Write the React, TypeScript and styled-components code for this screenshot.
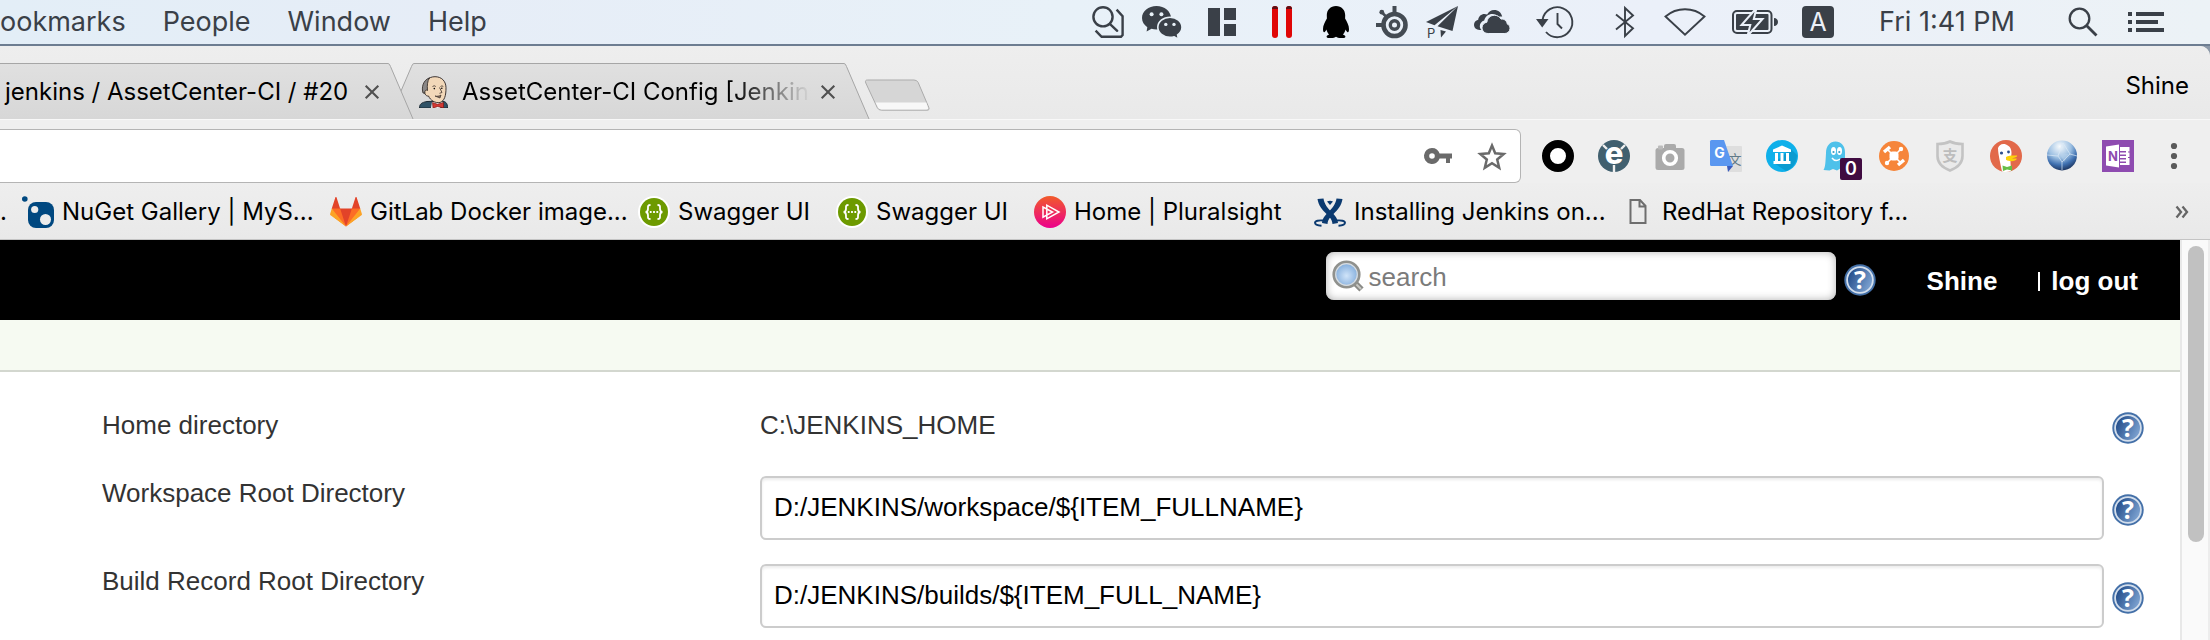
import React from 'react';
import styled, { createGlobalStyle } from 'styled-components';

const UI_FONT = 'Inter, Roboto, sans-serif';
const PAGE_FONT = '"Liberation Sans", Arial, Helvetica, sans-serif';
const INK = '#3a4048';

const GlobalStyle = createGlobalStyle`
  *, *::before, *::after { box-sizing: border-box; }
  body { margin: 0; background: #8d99a8; overflow: hidden; }
  button, input { font: inherit; color: inherit; margin: 0; padding: 0; border: 0; background: none; outline: none; }
  button { cursor: pointer; }
  a { color: inherit; text-decoration: none; }
  svg { display: block; flex: none; overflow: visible; }
`;

const Screen = styled.div`
  display: flex;
  flex-direction: column;
  min-height: 100vh;
  font-family: ${UI_FONT};
`;

/* ---------- system menu bar ---------- */

const MenuBar = styled.header`
  display: flex;
  align-items: center;
  justify-content: space-between;
  height: 46px;
  padding-right: 26px;
  color: ${INK};
  background: linear-gradient(90deg, #e3eef7, #e6edf7 20%, #e8f1f8 48%, #ebf0f9 75%, #ecf2f6);
  border-bottom: 2px solid #6d7d91;
  font-size: 27px;
  line-height: 32px;
  white-space: nowrap;
`;

const Menus = styled.nav`
  display: flex;
  gap: 37px;
`;

const MenuTitle = styled.button`
  height: 44px;
`;

const StatusArea = styled.div`
  display: flex;
  align-items: center;
`;

const StatusItem = styled.button<{ $width: number }>`
  display: flex;
  align-items: center;
  justify-content: center;
  width: ${(p) => p.$width}px;
  height: 44px;
`;

/* ---------- browser ---------- */

const Browser = styled.div`
  display: flex;
  flex: 1;
  flex-direction: column;
  border-top-right-radius: 10px;
  background: #ececec;
  overflow: hidden;
`;

const TabStrip = styled.div`
  display: flex;
  align-items: flex-end;
  height: 73px;
  background: linear-gradient(#eeeeee, #e9e9e9);
  font-size: 24px;
  line-height: 30px;
  color: #000;
`;

const Tab = styled.div<{ $width: number; $front?: boolean }>`
  position: relative;
  z-index: ${(p) => (p.$front ? 1 : 0)};
  display: flex;
  flex: none;
  width: ${(p) => p.$width}px;
  height: 56px;
  & + & { margin-left: -26px; }
`;

const TabBody = styled.div<{ $lead: number }>`
  display: flex;
  flex: 1;
  align-items: center;
  min-width: 0;
  padding: 0 8px 0 ${(p) => p.$lead}px;
  border-top: 1px solid #a6a6a6;
  background: linear-gradient(#e0e0e0, #d7d7d7);
`;

const TabTitle = styled.button<{ $fade?: boolean }>`
  display: flex;
  flex: 1;
  align-items: center;
  gap: 13px;
  min-width: 0;
  white-space: nowrap;
  mask-image: ${(p) => (p.$fade ? 'linear-gradient(90deg, #000 80%, transparent)' : 'none')};
`;

const CloseTab = styled.button`
  display: flex;
  justify-content: center;
  width: 16px;
  margin-left: 9px;
`;

const NewTab = styled.button`
  flex: none;
  margin: 0 0 8px -6px;
`;

const Account = styled.button`
  align-self: center;
  margin: 6px 21px 0 auto;
  line-height: 30px;
  height: 30px;
`;

const Toolbar = styled.div`
  display: flex;
  align-items: center;
  gap: 21px;
  padding: 9px 20px 0 0;
  border-top: 1px solid #f8f8f8;
  background: #efefef;
`;

const Omnibox = styled.div`
  display: flex;
  flex: 1;
  align-items: center;
  gap: 25px;
  height: 54px;
  padding-right: 13px;
  background: #fff;
  border: 1px solid #b4b4b4;
  border-left: 0;
  border-radius: 0 6px 6px 0;
`;

const Address = styled.input`
  flex: 1;
  min-width: 0;
  height: 50px;
  font-size: 24px;
`;

const Extensions = styled.div`
  display: flex;
  gap: 24px;
`;

const ExtensionButton = styled.button`
  position: relative;
  width: 32px;
  height: 32px;
`;

const Badge = styled.span`
  position: absolute;
  top: 18px;
  left: 18px;
  width: 22px;
  height: 22px;
  border-radius: 2px;
  background: #400b41;
  color: #fff;
  font-size: 18px;
  font-weight: 600;
  line-height: 22px;
  text-align: center;
`;

const BookmarksBar = styled.nav`
  display: flex;
  align-items: center;
  height: 57px;
  padding: 2px 21px 0 0;
  background: linear-gradient(#eeeeee, #e9e9e9);
  border-bottom: 1px solid #c4c4c4;
  font-size: 24px;
  line-height: 30px;
  color: #000;
  white-space: nowrap;
`;

const CutBookmark = styled.a`
  width: 22px;
`;

const Bookmark = styled.a<{ $width: number }>`
  display: flex;
  flex: none;
  align-items: center;
  gap: 8px;
  width: ${(p) => p.$width}px;
`;

const MoreBookmarks = styled.button`
  display: flex;
  margin-left: auto;
`;

/* ---------- web page ---------- */

const Viewport = styled.div`
  display: flex;
  flex: 1;
  background: #fff;
`;

const Page = styled.main`
  flex: 1;
  min-width: 0;
  font-family: ${PAGE_FONT};
  font-size: 26px;
  line-height: 30px;
  color: #333;
`;

const PageHeader = styled.div`
  display: flex;
  align-items: center;
  justify-content: flex-end;
  height: 80px;
  padding-right: 42px;
  background: #000;
  color: #fff;
  font-weight: bold;
`;

const SearchBox = styled.label`
  display: flex;
  align-items: center;
  gap: 5px;
  width: 510px;
  height: 48px;
  margin-bottom: 8px;
  padding: 0 6px;
  border-radius: 8px;
  background: #fff;
  box-shadow: inset 0 0 8px #b0b0b0;
  font-weight: normal;
`;

const SearchInput = styled.input`
  flex: 1;
  min-width: 0;
  height: 34px;
  padding-top: 2px;
  color: #000;
  &::placeholder { color: #7b7b7b; opacity: 1; }
`;

const HelpLink = styled.a`
  flex: none;
  width: 32px;
  height: 32px;
`;

const SearchHelp = styled(HelpLink)`
  margin: 0 51px 0 8px;
`;

const LogOut = styled.span`
  display: flex;
  align-items: center;
  gap: 11px;
  margin-left: 41px;
  &::before {
    content: '';
    width: 2px;
    height: 19px;
    background: #fff;
  }
`;

const HeaderText = styled.div`
  display: flex;
  padding-top: 2px;
`;

const Breadcrumbs = styled.div`
  height: 52px;
  background: #f6faf2;
  border-bottom: 2px solid #d3d7cf;
`;

const Form = styled.form`
  padding: 36px 36px 0 102px;
`;

const Row = styled.div<{ $height: number; $lead: number }>`
  display: grid;
  grid-template-columns: 658px 1fr 32px;
  align-items: start;
  height: ${(p) => p.$height}px;
  & > ${HelpLink} { margin-top: ${(p) => p.$lead}px; }
`;

const FieldLabel = styled.label`
  padding-top: 2px;
`;

const FieldValue = styled.output`
  padding-top: 2px;
`;

const TextField = styled.input`
  height: 64px;
  margin-right: 8px;
  padding: 0 12px 2px;
  border: 2px solid #ccc;
  border-radius: 6px;
  box-shadow: inset 0 2px 3px rgba(0, 0, 0, 0.08);
  background: #fff;
  color: #000;
`;

const ScrollTrack = styled.div`
  width: 30px;
  padding: 6px 4px 0 6px;
  background: #fafafa;
  border-left: 2px solid #e8e8e8;
  border-right: 2px solid #ededed;
`;

const ScrollThumb = styled.div`
  width: 16px;
  height: 296px;
  border-radius: 8px;
  background: #c1c1c1;
`;

/* ---------- drawings ---------- */

const FindNoteIcon = () => (
  <svg width="32" height="32" viewBox="0 0 32 32" fill="none" stroke={INK} strokeWidth="2.4">
    <circle cx="11" cy="10.8" r="9.6" />
    <path d="M17.8 17.8l7.4 7" strokeLinecap="round" />
    <path d="M24.6 3.6l6 6.6V29l-1.6 1.8H9.6L3.6 24.6" />
  </svg>
);

const WeChatIcon = () => (
  <svg width="40" height="34" viewBox="0 0 40 34">
    <path fill={INK} d="M14.5 1C6.5 1 0 6.3 0 13c0 3.8 2.1 7 5.3 9.2L4.6 26.5l4.9-2.7c1.6.4 3.2.7 5 .7C22.5 24.5 29 19.5 29 13S22.5 1 14.5 1z" />
    <circle cx="9.6" cy="9.3" r="2" fill="#e8f1f8" />
    <circle cx="19.4" cy="9.3" r="2" fill="#e8f1f8" />
    <path fill={INK} stroke="#e8f1f8" strokeWidth="1.6" d="M28 12.2c-6.8 0-12.2 4.5-12.2 10.1S21.2 32.4 28 32.4c1.5 0 2.9-.2 4.2-.6l4.2 2.3-.8-4.2c2.6-1.8 4.4-4.5 4.4-7.6 0-5.6-5.3-10.1-12-10.1z" />
    <circle cx="23.8" cy="19.4" r="1.7" fill="#e8f1f8" />
    <circle cx="32" cy="19.4" r="1.7" fill="#e8f1f8" />
  </svg>
);

const PanesIcon = () => (
  <svg width="28" height="28" viewBox="0 0 28 28" fill={INK}>
    <path d="M0 0h12v28H0zM16 0h12v12H16zM16 16h12v12H16z" />
  </svg>
);

const ParallelsIcon = () => (
  <svg width="20" height="32" viewBox="0 0 20 32">
    <rect x="0" y="0" width="6" height="32" rx="3" fill="#e00606" />
    <rect x="14" y="0" width="6" height="32" rx="3" fill="#e00606" />
    <path d="M0 3a3 3 0 0 1 6 0zM14 3a3 3 0 0 1 6 0z" fill="#5b1015" />
  </svg>
);

const PenguinIcon = () => (
  <svg width="26" height="32" viewBox="0 0 26 32">
    <path d="M13 0C7.5 0 3.8 4 3.8 9.3c0 1.2.1 2.2.1 3.2C2 15.8 0 19.5 0 23c0 2.3.6 3.4 1.2 3.2.7-.2 1.6-1.4 2.3-2.7.4 1.9 1.3 3.6 2.6 5-1.600.5-2.5 1.3-2.5 2.2 0 1.3 2 1.3 4.6 1.3 2 0 3.8-.4 4.8-1.2 1 .8 2.8 1.2 4.8 1.2 2.6 0 4.6 0 4.600-1.3 0-.9-.9-1.7-2.5-2.2 1.3-1.4 2.2-3.1 2.6-5 .7 1.3 1.6 2.5 2.3 2.7.6.2 1.2-.9 1.2-3.2 0-3.500-2-7.200-3.900-10.500 0-1 .1-2 .1-3.200C22.200 4 18.500 0 13 0z" />
  </svg>
);

const GearNodeIcon = () => (
  <svg width="32" height="32" viewBox="0 0 32 32" fill="none" stroke="#444b53">
    <circle cx="18.5" cy="19" r="11" strokeWidth="4.6" />
    <circle cx="18.5" cy="19" r="4.2" strokeWidth="3.4" />
    <path d="M18.500 8V0M8 19H0" strokeWidth="4" />
    <path d="M10.500 11L5.500 6" strokeWidth="2.5" />
    <circle cx="5.8" cy="6.2" r="2.4" fill="#444b53" stroke="none" />
  </svg>
);

const PlaneIcon = () => (
  <svg width="32" height="34" viewBox="0 0 32 34" fill={INK}>
    <path d="M32 1L0 17l8.500 3.200zM32 1L11.500 21.300 26.500 26z" />
    <path d="M14.500 25l5.500 1.500-5 6z" />
    <text x="1" y="33" fontSize="13" fontFamily="Inter, sans-serif">P</text>
  </svg>
);

const CloudsIcon = () => (
  <svg width="36" height="24" viewBox="0 0 36 24" fill={INK}>
    <path d="M7.500 20H5.600C2.300 20 0 17.700 0 14.800c0-2.600 1.700-4.600 4.200-5.100C4.500 6.200 7.300 3.900 10.400 3.900c1 0 1.800.2 2.700.6C14.500 1.800 17 0 20.200 0c4 0 7.200 2.700 8 6.700-1.200-.2-2.300-.1-3.400.2C23 4.900 20.800 4 18.500 4c-4.100 0-7.500 2.700-8.300 6.600-2.700.8-4.400 3-4.400 5.700 0 1.400.6 2.700 1.700 3.700z" />
    <path d="M14.200 23.500C10.700 23.500 8 21 8 17.800c0-2.900 2.100-5.200 4.900-5.600.4-4 3.600-6.900 7.500-6.900 2.900 0 5.300 1.500 6.600 3.800 3.100-.5 6 1.800 6.300 5 1.700.6 2.700 2.200 2.700 4.200 0 2.900-2.200 5.200-5.100 5.200z" stroke="#e9f0f9" strokeWidth="1" />
  </svg>
);

const TimeMachineIcon = () => (
  <svg width="38" height="34" viewBox="0 0 38 34" fill="none" stroke={INK} strokeWidth="1.9">
    <path d="M6.500 15A15 15 0 1 1 10 27" />
    <path d="M0 14h12.500L6.200 22.500z" fill={INK} stroke="none" />
    <path d="M21.500 8v11l4.500 4.500" />
  </svg>
);

const BluetoothIcon = () => (
  <svg width="18" height="32" viewBox="0 0 18 32" fill="none" stroke={INK} strokeWidth="1.9">
    <path d="M0 8.500l17 13.700-8 7.800V2l8 7.500L0 23.500" />
  </svg>
);

const WifiIcon = () => (
  <svg width="42" height="28" viewBox="0 0 42 28" fill="none" stroke={INK} strokeWidth="1.9">
    <path d="M1.500 8.500Q10 1.300 21 1.300t19.500 7.200L21 26.600z" />
  </svg>
);

const BatteryIcon = () => (
  <svg width="46" height="28" viewBox="0 0 46 28">
    <rect x="1" y="3" width="38.5" height="22" rx="4" fill="none" stroke={INK} strokeWidth="2" />
    <rect x="4" y="6" width="32.5" height="16" rx="1" fill={INK} />
    <path d="M42 10c2.500 0 4 1.700 4 4s-1.500 4-4 4z" fill={INK} />
    <path d="M24.500 0L9.500 17h8.800L15.500 28l15-17h-8.700z" fill={INK} stroke="#ebf0f9" strokeWidth="2" />
  </svg>
);

const InputSourceIcon = () => (
  <svg width="32" height="32" viewBox="0 0 32 32">
    <rect width="32" height="32" rx="4" fill={INK} />
    <text x="16" y="25" fontSize="25" textAnchor="middle" fill="#ecf0f8" fontFamily="Inter, sans-serif">A</text>
  </svg>
);

const SpotlightIcon = () => (
  <svg width="30" height="30" viewBox="0 0 30 30" fill="none" stroke={INK} strokeWidth="2.3">
    <circle cx="11.5" cy="11.5" r="9.8" />
    <path d="M18.500 18.500l10 10" strokeWidth="2.8" />
  </svg>
);

const ListIcon = () => (
  <svg width="36" height="20" viewBox="0 0 36 20" fill={INK}>
    <path d="M0 0h4v4H0zM8 0h28v4H8zM0 8h4v4H0zM8 8h22v4H8zM0 16h4v4H0zM8 16h28v4H8z" />
  </svg>
);

const JenkinsIcon = () => (
  <svg width="30" height="32" viewBox="0 0 30 32">
    <path d="M.5 32c0-4 2-5.500 7.500-6.500l14-.5c5 .5 6.500 2 6.500 7z" fill="#2f5266" stroke="#1c2a33" />
    <path d="M13 26l-1 6h9l3-6z" fill="#f4f4f4" />
    <path d="M5.500 12C5.500 5 9.500.7 16 .7S26.800 5 27 11.500c.1 8-1.500 13.500-6 15-5 .8-9.500-2-11.500-6.500C6.500 20.500 4.500 16.500 5.500 12z" fill="#f2d8b9" stroke="#2b2320" strokeWidth=".9" />
    <path d="M8.500 14.500c-1.500-1-3 0-2.600 2.800L4 17C2.500 12 3.500 4.500 10.500 1.800 8.500 5 8 9 8.500 14.500z" fill="#8a8786" stroke="#2b2320" strokeWidth=".8" />
    <path d="M13.500 10.500q1.800-1.500 3.300 0M21.500 10.500q1.500-1.300 2.800 0M20.500 11.500l2.500 5-2.500.8" fill="none" stroke="#3a2f2a" strokeWidth=".8" />
    <path d="M16 20c2 .5 4 .3 6-1l-1 3z" fill="#8a7466" stroke="#3a2f2a" strokeWidth=".7" />
    <circle cx="15.3" cy="12.6" r=".8" /><circle cx="22.8" cy="12.3" r=".8" />
    <path d="M13.500 26.500l5 1.800 6-1.800V32l-5.800-1.500L14 32z" fill="#d33833" stroke="#7c1511" strokeWidth=".7" />
  </svg>
);

const CloseIcon = () => (
  <svg width="14" height="14" viewBox="0 0 14 14" stroke="#505050" strokeWidth="2.1">
    <path d="M.7.7l12.600 12.600M13.300.7L.7 13.300" />
  </svg>
);

const TabEdge = ({ side }: { side: 'left' | 'right' }) => (
  <svg width="26" height="56" viewBox="0 0 26 56" aria-hidden="true">
    <defs>
      <linearGradient id={`edge-${side}`} x1="0" y1="0" x2="0" y2="1">
        <stop offset="0" stopColor="#e0e0e0" />
        <stop offset="1" stopColor="#d7d7d7" />
      </linearGradient>
    </defs>
    {side === 'right' ? (
      <>
        <path d="M0 0q1.500 0 2.500 3L25 56H0z" fill={`url(#edge-${side})`} />
        <path d="M0 .5q1.500 0 2.500 3L25 56" fill="none" stroke="#a6a6a6" />
      </>
    ) : (
      <>
        <path d="M26 0q-1.500 0-2.500 3L1 56h25z" fill={`url(#edge-${side})`} />
        <path d="M26 .5q-1.500 0-2.500 3L1 56" fill="none" stroke="#a6a6a6" />
      </>
    )}
  </svg>
);

const NewTabShape = () => (
  <svg width="66" height="32" viewBox="0 0 66 32">
    <path d="M3.500 1H50q3 0 4.200 2.500l10.500 24.700q1.300 3-1.700 3H17.500q-3 0-4.200-2.500L1.800 4Q.6 1 3.500 1z" fill="#d6d6d6" stroke="#ababab" />
    <path d="M11.500 23.500h50.800L64 28.500q.6 2-1.500 2H17.500q-2.500 0-3.500-2z" fill="#f8f8f8" />
  </svg>
);

const KeyIcon = () => (
  <svg width="28" height="16" viewBox="0 0 28 16" fill="#6a6a6a">
    <path fillRule="evenodd" d="M8 0a8 8 0 1 0 7.600 10.400H22V15h4v-4.600h2V5.600H15.600A8 8 0 0 0 8 0zm0 5.200a2.800 2.800 0 1 1 0 5.600 2.800 2.800 0 0 1 0-5.600z" />
  </svg>
);

const StarIcon = () => (
  <svg width="30" height="28" viewBox="0 0 30 28" fill="none" stroke="#6a6a6a" strokeWidth="2.5">
    <path d="M15 3.500l3.200 7.800 8.500.7-6.500 5.500 2 8.300-7.200-4.500-7.200 4.500 2-8.300L3.300 12l8.500-.7z" />
  </svg>
);

const RingIcon = () => (
  <svg width="32" height="32" viewBox="0 0 32 32">
    <circle cx="16" cy="16" r="12" fill="#fff" stroke="#000" strokeWidth="8" />
  </svg>
);

const BugIcon = () => (
  <svg width="32" height="32" viewBox="0 0 32 32">
    <circle cx="16" cy="16" r="16" fill="#41606f" />
    <path d="M5 5l4 4M27 5l-4 4M16 25v7" stroke="#f0f0f0" strokeWidth="2.4" />
    <text x="16" y="24" fontSize="31" fontWeight="800" textAnchor="middle" fill="#fff" fontFamily="Inter, sans-serif">e</text>
  </svg>
);

const CameraIcon = () => (
  <svg width="32" height="32" viewBox="0 0 32 32">
    <rect x="1.5" y="8" width="29" height="22" rx="2.5" fill="#aaa" />
    <rect x="10" y="4" width="12" height="7" rx="2" fill="#aaa" />
    <rect x="4" y="5.5" width="5" height="4" rx="1" fill="#bbb" />
    <circle cx="16" cy="18" r="6.3" fill="#aaa" stroke="#fff" strokeWidth="3.6" />
  </svg>
);

const TranslateIcon = () => (
  <svg width="32" height="32" viewBox="0 0 32 32">
    <path d="M16 6h15q1 0 1 1v24q0 1-1 1H18z" fill="#dedede" />
    <text x="25" y="24" fontSize="13" textAnchor="middle" fill="#607988" fontFamily='"Noto Sans CJK SC", sans-serif'>文</text>
    <path d="M17 26h6l-5 6z" fill="#3a5bbd" />
    <path d="M1.500 0H14l9 26H1.500Q0 26 0 24.500v-23Q0 0 1.500 0z" fill="#5a97f0" />
    <text x="9.5" y="18" fontSize="14" fontWeight="700" textAnchor="middle" fill="#fff" fontFamily="Inter, sans-serif">G</text>
  </svg>
);

const TempleIcon = () => (
  <svg width="32" height="32" viewBox="0 0 32 32">
    <circle cx="16" cy="16" r="16" fill="#0fb0ea" />
    <path d="M25 9l6 6a16 16 0 0 1-11 16L8 23z" fill="#0a9bd0" />
    <path d="M16 5.500L25 9.500V12H7V9.500zM9 13h3v8H9zM14.500 13h3v8h-3zM20 13h3v8h-3zM7.500 21h17v3h-17z" fill="#fff" />
  </svg>
);

const GhostIcon = () => (
  <svg width="32" height="32" viewBox="0 0 32 32">
    <path d="M4 13C4 6 8 1.500 13.500 1.500S23 6 23 12v18l-4-2-4 2.500-4-1.500-3.500 1.500-6-.5c2-3 2-9 2.500-17z" fill="#4ec1ea" />
    <ellipse cx="11.500" cy="11" rx="2.500" ry="4" fill="#fff" />
    <ellipse cx="17.500" cy="11" rx="2.500" ry="4" fill="#fff" />
    <circle cx="11.500" cy="12" r="1.100" fill="#3a9cc4" /><circle cx="17.300" cy="12" r="1.100" fill="#3a9cc4" />
    <path d="M10 18q3.500 4.500 8 1" fill="none" stroke="#fff" strokeWidth="1.5" />
  </svg>
);

const DroneIcon = () => (
  <svg width="32" height="32" viewBox="0 0 32 32">
    <circle cx="16" cy="16" r="15" fill="#f6853a" />
    <path d="M9 9l14 14M23 9L9 23" stroke="#fff" strokeWidth="1.6" />
    <path d="M6 12l6-5M20 25l6-5" stroke="#fff" strokeWidth="3.4" />
    <circle cx="23" cy="9" r="2.2" fill="#fff" /><circle cx="9" cy="23" r="2.2" fill="#fff" />
    <rect x="11.5" y="11.5" width="9" height="9" rx="3" fill="#fff" />
  </svg>
);

const ShieldIcon = () => (
  <svg width="32" height="32" viewBox="0 0 32 32">
    <path d="M16 1.500c4 2 8 2.500 12.500 2.500v12c0 7-4.500 11.500-12.500 14.500C8 27.500 3.500 23 3.500 16V4C8 4 12 3.500 16 1.500z" fill="#eaeaea" stroke="#c3c3c3" strokeWidth="2.6" />
    <text x="16" y="21" fontSize="15" fontWeight="700" textAnchor="middle" fill="#bdbdbd" fontFamily='"Noto Sans CJK SC", sans-serif'>支</text>
  </svg>
);

const DuckIcon = () => (
  <svg width="32" height="32" viewBox="0 0 32 32">
    <circle cx="16" cy="16" r="16" fill="#e2694a" />
    <path d="M8 8c1-3 4-5 8-3.500C20 6 21.500 9 21.500 13c0 4-1.500 6-1 9l.5 9c-3 1.200-6 1.300-9 .5C10.500 24 8 14 8 8z" fill="#fff" />
    <circle cx="11.500" cy="13" r="1.600" fill="#2d4f8e" /><circle cx="18.500" cy="12" r="1.400" fill="#2d4f8e" />
    <path d="M16 17c3-2 8-1.500 11-1.500 1 1-2 2.200-5 2.800 2 .3 4 .2 5 .4-1 2.500-7 3.500-11 1z" fill="#fdd20a" />
    <path d="M12.500 25.500l4.500 1.500 5-1.500v5l-5-1-4 1.500z" fill="#67bd47" />
  </svg>
);

const GlobeIcon = () => (
  <svg width="32" height="32" viewBox="0 0 32 32">
    <defs>
      <radialGradient id="globe" cx=".42" cy=".2" r=".85">
        <stop offset="0" stopColor="#f6fafd" />
        <stop offset=".45" stopColor="#9dc0e2" />
        <stop offset=".72" stopColor="#3f70b0" />
        <stop offset="1" stopColor="#16294f" />
      </radialGradient>
    </defs>
    <circle cx="16" cy="15.5" r="15" fill="url(#globe)" />
    <path d="M1 15l11 1 4 6 8-8-7-11M12 16l5-13M24 14l7 2M16 22v8" stroke="#dceaf6" strokeOpacity=".7" fill="none" />
    <path d="M14 14l4 8 5-8z" fill="#b9d3ec" fillOpacity=".5" />
  </svg>
);

const OneNoteIcon = () => (
  <svg width="32" height="32" viewBox="0 0 32 32">
    <rect width="32" height="32" fill="#8e4bb0" />
    <path d="M4 6.500L17 4.500v23l-13-2z" fill="#fff" />
    <path d="M18 7h9.500v18H18v-2h6v-1.500h-6v-2h6V18h-6v-2h6v-1.500h-6v-2h6V11h-6z" fill="#fff" />
    <path d="M26 12h3M26 17.500h3" stroke="#8e4bb0" strokeWidth="1.2" />
    <text x="11" y="20.500" fontSize="13" fontWeight="700" textAnchor="middle" fill="#8e4bb0" fontFamily="Inter, sans-serif">N</text>
  </svg>
);

const DotsIcon = () => (
  <svg width="32" height="32" viewBox="0 0 32 32" fill="#5a5a5a">
    <circle cx="16" cy="6" r="3.1" /><circle cx="16" cy="16" r="3.1" /><circle cx="16" cy="26" r="3.1" />
  </svg>
);

const NuGetIcon = () => (
  <svg width="32" height="32" viewBox="0 0 32 32">
    <circle cx="2.8" cy="3" r="2.8" fill="#004880" />
    <rect x="6" y="6" width="26" height="26" rx="8" fill="#004880" />
    <circle cx="12.7" cy="13.5" r="3.6" fill="#ececec" />
    <circle cx="23.5" cy="23.5" r="5.5" fill="#ececec" />
  </svg>
);

const GitLabIcon = () => (
  <svg width="32" height="32" viewBox="0 0 36 36">
    <path fill="#e24329" d="M2 14l9.380 9v-9l-4-12.280c-.205-.632-1.176-.632-1.380 0z" />
    <path fill="#e24329" d="M34 14l-9.380 9v-9l4-12.280c.205-.632 1.176-.632 1.380 0z" />
    <path fill="#e24329" d="M18 34.380L3 14h30z" />
    <path fill="#fc6d26" d="M18 34.380L11.380 14H2l4 11z" />
    <path fill="#fc6d26" d="M18 34.380L24.620 14H34l-4 11z" />
    <path fill="#fca326" d="M2 14L.1 20.160c-.18.565 0 1.200.5 1.560l17.420 12.660z" />
    <path fill="#fca326" d="M34 14l1.900 6.160c.18.565 0 1.200-.5 1.560L18 34.380z" />
  </svg>
);

const SwaggerIcon = () => (
  <svg width="32" height="32" viewBox="0 0 32 32">
    <circle cx="16" cy="16" r="16" fill="#fff" />
    <circle cx="16" cy="16" r="14" fill="#6d9a00" />
    <path d="M12.500 9c-3 0-2.500 1.500-2.500 3.500S9.500 16 7.500 16c2 0 2.500 1.500 2.500 3.500s-.5 3.500 2.500 3.500M19.500 9c3 0 2.500 1.500 2.500 3.500s.5 3.500 2.500 3.500c-2 0-2.500 1.500-2.500 3.500s.5 3.500-2.500 3.500" fill="none" stroke="#fff" strokeWidth="1.8" />
    <path d="M11.800 16h1.800M15.100 16h1.800M18.400 16h1.800" stroke="#fff" strokeWidth="1.8" />
  </svg>
);

const PluralsightIcon = () => (
  <svg width="32" height="32" viewBox="0 0 32 32">
    <defs>
      <linearGradient id="ps" x1="0" y1="0" x2="0" y2="1">
        <stop offset="0" stopColor="#f15b2a" />
        <stop offset="1" stopColor="#ec008c" />
      </linearGradient>
    </defs>
    <circle cx="16" cy="16" r="16" fill="url(#ps)" />
    <path d="M12.800 9.200v13.600L25 16zM9 11v10.200L18.500 16z" fill="none" stroke="#fff" strokeWidth="1.5" />
  </svg>
);

const ConfluenceIcon = () => (
  <svg width="32" height="32" viewBox="0 0 32 32" fill="#0b3a70">
    <path d="M3.500 3l6-.5c1 6 4 9.500 8 13.500 3.500 3.500 6 6 6.500 11l-5.500 1c-.5-5-3-7-6-10C8 13.500 4.500 9.500 3.500 3z" />
    <path d="M28.500 3l-6-.5c-1 6-4 9.500-8 13.500-3.500 3.500-6 6-6.500 11l5.500 1c.5-5 3-7 6-10 4.500-4.500 8-8.500 9-15z" />
    <path d="M13 5.500q3-1.500 6 0l-3 3.500z" />
    <path d="M9 24.500c-4-.5-8 .5-8 2.300 0 1.500 3 2.700 6.500 3M23 24.500c4-.5 8 .5 8 2.300 0 1.500-3 2.700-6.500 3" fill="none" stroke="#0b3a70" strokeWidth="1.9" />
  </svg>
);

const FileIcon = () => (
  <svg width="32" height="32" viewBox="0 0 32 32" fill="none" stroke="#6e6e6e" strokeWidth="2">
    <path d="M8.500 4h9.500l5.500 6V27h-15zM17.500 4.500v6h5.500" />
  </svg>
);

const ChevronsIcon = () => (
  <svg width="14" height="14" viewBox="0 0 14 14" fill="none" stroke="#666" strokeWidth="2.3">
    <path d="M1.500 1.500L6 7l-4.500 5.500M7.500 1.500L12 7l-4.500 5.500" />
  </svg>
);

const MagnifierIcon = () => (
  <svg width="32" height="32" viewBox="0 0 32 32">
    <defs>
      <radialGradient id="lens" cx=".5" cy=".55" r=".6">
        <stop offset="0" stopColor="#d0e4f9" />
        <stop offset="1" stopColor="#6f9fd4" />
      </radialGradient>
    </defs>
    <path d="M22 22l7.500 7.500" stroke="#8a8a86" strokeWidth="6" />
    <path d="M22.500 22.500l6.500 6.500" stroke="#c9c9c4" strokeWidth="2" />
    <circle cx="14.5" cy="14.5" r="12.7" fill="url(#lens)" stroke="#90918d" strokeWidth="2.8" />
    <circle cx="14.5" cy="14.5" r="10.8" fill="none" stroke="#d9dcde" strokeWidth="1.2" />
  </svg>
);

const HelpIcon = ({ id }: { id: string }) => (
  <svg width="32" height="32" viewBox="0 0 32 32">
    <defs>
      <linearGradient id={id} x1="0" y1=".3" x2="1" y2=".8">
        <stop offset="0" stopColor="#1f4a88" />
        <stop offset="1" stopColor="#86abd8" />
      </linearGradient>
    </defs>
    <circle cx="16" cy="16" r="15.7" fill="#4470a8" />
    <circle cx="16" cy="16" r="12.9" fill={`url(#${id})`} stroke="#d3deec" strokeWidth="1.8" />
    <text x="16" y="25" fontSize="25" fontWeight="700" textAnchor="middle" fill="#fff" fontFamily='"Open Sans", sans-serif'>?</text>
  </svg>
);

/* ---------- data ---------- */

const statusItems = [
  { name: 'Find in notes', width: 56, icon: <FindNoteIcon /> },
  { name: 'WeChat', width: 52, icon: <WeChatIcon /> },
  { name: 'Window layout', width: 68, icon: <PanesIcon /> },
  { name: 'Parallels', width: 52, icon: <ParallelsIcon /> },
  { name: 'QQ', width: 56, icon: <PenguinIcon /> },
  { name: 'SteelSeries', width: 56, icon: <GearNodeIcon /> },
  { name: 'Proxy', width: 44, icon: <PlaneIcon /> },
  { name: 'OneDrive', width: 56, icon: <CloudsIcon /> },
  { name: 'Time Machine', width: 70, icon: <TimeMachineIcon /> },
  { name: 'Bluetooth', width: 70, icon: <BluetoothIcon /> },
  { name: 'Wi-Fi', width: 50, icon: <WifiIcon /> },
  { name: 'Battery', width: 90, icon: <BatteryIcon /> },
  { name: 'Input source', width: 36, icon: <InputSourceIcon /> },
  { name: 'Clock', width: 222, icon: 'Fri 1:41 PM' },
  { name: 'Spotlight', width: 50, icon: <SpotlightIcon /> },
  { name: 'Notification Center', width: 76, icon: <ListIcon /> },
];

const extensions = [
  { name: 'Ring', icon: <RingIcon /> },
  { name: 'Edge tools', icon: <BugIcon /> },
  { name: 'Screenshot', icon: <CameraIcon /> },
  { name: 'Translate', icon: <TranslateIcon /> },
  { name: 'Library', icon: <TempleIcon /> },
  { name: 'Ghostery', icon: <GhostIcon />, badge: '0' },
  { name: 'Postman', icon: <DroneIcon /> },
  { name: 'Alipay', icon: <ShieldIcon /> },
  { name: 'DuckDuckGo', icon: <DuckIcon /> },
  { name: 'Globe', icon: <GlobeIcon /> },
  { name: 'OneNote', icon: <OneNoteIcon /> },
  { name: 'Browser menu', icon: <DotsIcon /> },
];

const bookmarks = [
  { title: 'NuGet Gallery | MyS...', width: 308, icon: <NuGetIcon /> },
  { title: 'GitLab Docker image...', width: 308, icon: <GitLabIcon /> },
  { title: 'Swagger UI', width: 198, icon: <SwaggerIcon /> },
  { title: 'Swagger UI', width: 198, icon: <SwaggerIcon /> },
  { title: 'Home | Pluralsight', width: 280, icon: <PluralsightIcon /> },
  { title: 'Installing Jenkins on...', width: 308, icon: <ConfluenceIcon /> },
  { title: 'RedHat Repository f...', width: 308, icon: <FileIcon /> },
];

const fields = [
  { id: 'workspace', label: 'Workspace Root Directory', value: 'D:/JENKINS/workspace/${ITEM_FULLNAME}' },
  { id: 'builds', label: 'Build Record Root Directory', value: 'D:/JENKINS/builds/${ITEM_FULL_NAME}' },
];

export default function App() {
  return (
    <Screen>
      <GlobalStyle />
      <MenuBar>
        <Menus>
          {['ookmarks', 'People', 'Window', 'Help'].map((m) => (
            <MenuTitle key={m}>{m}</MenuTitle>
          ))}
        </Menus>
        <StatusArea>
          {statusItems.map((s) => (
            <StatusItem key={s.name} $width={s.width} aria-label={s.name}>{s.icon}</StatusItem>
          ))}
        </StatusArea>
      </MenuBar>

      <Browser>
        <TabStrip>
          <Tab $width={414} $front>
            <TabBody $lead={5}>
              <TabTitle>jenkins / AssetCenter-CI / #20</TabTitle>
              <CloseTab aria-label="Close tab"><CloseIcon /></CloseTab>
            </TabBody>
            <TabEdge side="right" />
          </Tab>
          <Tab $width={482}>
            <TabEdge side="left" />
            <TabBody $lead={5}>
              <TabTitle $fade><JenkinsIcon />AssetCenter-CI Config [Jenkins</TabTitle>
              <CloseTab aria-label="Close tab"><CloseIcon /></CloseTab>
            </TabBody>
            <TabEdge side="right" />
          </Tab>
          <NewTab aria-label="New tab"><NewTabShape /></NewTab>
          <Account>Shine</Account>
        </TabStrip>

        <Toolbar>
          <Omnibox>
            <Address aria-label="Address" />
            <KeyIcon />
            <StarIcon />
          </Omnibox>
          <Extensions>
            {extensions.map((e) => (
              <ExtensionButton key={e.name} aria-label={e.name}>
                {e.icon}
                {e.badge && <Badge>{e.badge}</Badge>}
              </ExtensionButton>
            ))}
          </Extensions>
        </Toolbar>

        <BookmarksBar>
          <CutBookmark href="#">.</CutBookmark>
          {bookmarks.map((b, i) => (
            <Bookmark key={i} href="#" $width={b.width}>{b.icon}{b.title}</Bookmark>
          ))}
          <MoreBookmarks aria-label="More bookmarks"><ChevronsIcon /></MoreBookmarks>
        </BookmarksBar>

        <Viewport>
          <Page>
            <PageHeader>
              <SearchBox>
                <MagnifierIcon />
                <SearchInput placeholder="search" aria-label="search" />
              </SearchBox>
              <SearchHelp href="#" aria-label="Search help"><HelpIcon id="help-search" /></SearchHelp>
              <HeaderText>
                <a href="#">Shine</a>
                <LogOut><a href="#">log out</a></LogOut>
              </HeaderText>
            </PageHeader>
            <Breadcrumbs />
            <Form>
              <Row $height={68} $lead={4}>
                <FieldLabel htmlFor="home">Home directory</FieldLabel>
                <FieldValue id="home">C:\JENKINS_HOME</FieldValue>
                <HelpLink href="#" aria-label="Help"><HelpIcon id="help-home" /></HelpLink>
              </Row>
              {fields.map((f) => (
                <Row key={f.id} $height={88} $lead={18}>
                  <FieldLabel htmlFor={f.id}>{f.label}</FieldLabel>
                  <TextField id={f.id} defaultValue={f.value} />
                  <HelpLink href="#" aria-label="Help"><HelpIcon id={`help-${f.id}`} /></HelpLink>
                </Row>
              ))}
            </Form>
          </Page>
          <ScrollTrack><ScrollThumb /></ScrollTrack>
        </Viewport>
      </Browser>
    </Screen>
  );
}
